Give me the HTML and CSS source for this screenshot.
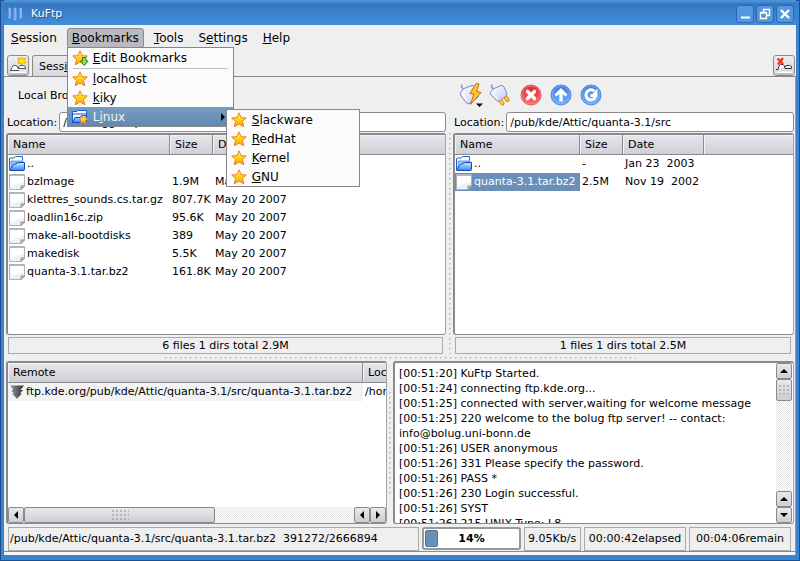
FILE: index.html
```html
<!DOCTYPE html>
<html lang="en">
<head>
    <meta charset="UTF-8">
    <meta name="viewport" content="width=device-width, initial-scale=1.0">
    <title>KuFtp</title>
    <link rel="stylesheet" href="styles.css">
</head>
<body>
    <!-- Shared icons -->
    <svg class="icon-defs" aria-hidden="true">
        <defs>
            <linearGradient id="gold" x1="0" y1="0" x2="0" y2="1">
                <stop offset="0" stop-color="#fff27a"/>
                <stop offset="0.5" stop-color="#ffd21c"/>
                <stop offset="1" stop-color="#ff9a10"/>
            </linearGradient>
            <linearGradient id="folderFill" x1="0" y1="0" x2="0" y2="1">
                <stop offset="0" stop-color="#d5ecff"/>
                <stop offset="1" stop-color="#2f86ee"/>
            </linearGradient>
            <linearGradient id="blueFill" x1="0" y1="0" x2="0" y2="1">
                <stop offset="0" stop-color="#3b76e0"/>
                <stop offset="1" stop-color="#6fb8ff"/>
            </linearGradient>
            <linearGradient id="redFill" x1="0" y1="0" x2="0" y2="1">
                <stop offset="0" stop-color="#e01c2c"/>
                <stop offset="1" stop-color="#ff7468"/>
            </linearGradient>
            <linearGradient id="plugFill" x1="0" y1="0" x2="1" y2="1">
                <stop offset="0" stop-color="#ffffff"/>
                <stop offset="1" stop-color="#c3cbee"/>
            </linearGradient>
            <linearGradient id="greyFill" x1="0" y1="0" x2="1" y2="0">
                <stop offset="0" stop-color="#999"/>
                <stop offset="1" stop-color="#2e2e2e"/>
            </linearGradient>
        </defs>
        <symbol id="star" viewBox="0 0 16 16">
            <path d="M8 0.8 L10.1 5.6 L15.3 6 L11.4 9.4 L12.8 14.8 L8 12 L3.2 14.8 L4.6 9.4 L0.7 6 L5.9 5.6 Z" fill="url(#gold)" stroke="#ee7f1a" stroke-linejoin="round"/>
        </symbol>
        <symbol id="star-edit" viewBox="0 0 16 16">
            <path d="M8 0.8 L10.1 5.6 L15.3 6 L11.4 9.4 L12.8 14.8 L8 12 L3.2 14.8 L4.6 9.4 L0.7 6 L5.9 5.6 Z" fill="url(#gold)" stroke="#ee7f1a" stroke-linejoin="round"/>
            <path d="M10.5 7.5 H14 V11 H16 L12.2 15.4 L8.4 11 H10.5 Z" fill="#9be04a" stroke="#2c7d1c"/>
        </symbol>
        <symbol id="folder" viewBox="0 0 16 16">
            <path d="M0.5 14 V3 Q0.5 2 1.5 2 H5 L6.5 0.5 H13.5 V4.5" fill="#fff" stroke="#1b5fd0"/>
            <path d="M2 5 H14 V7 H5 L2 12 Z" fill="#9fd0ff" stroke="#1b5fd0" stroke-width="0.6"/>
            <path d="M0.8 14.5 L3.5 9.5 Q4 8.5 5.5 8.5 L8.5 6.8 Q9.2 6.5 10 6.5 H15.5 V13.5 Q15.5 14.5 14.5 14.5 Z" fill="url(#folderFill)" stroke="#0c49c0"/>
        </symbol>
        <symbol id="folder-star" viewBox="0 0 16 16">
            <path d="M0.5 12.5 V2.5 H5 L6 1.5 H14.5 V12 Z" fill="#f4faff" stroke="#1b5fd0"/>
            <path d="M1 5 H14" stroke="#1b5fd0"/>
            <path d="M0.5 13.5 L3 8.5 H8 L9.5 6.5 H14.5 V13.5 Z" fill="url(#folderFill)" stroke="#0c49c0"/>
            <path d="M11.5 6 L12.9 9 L16 9.4 L13.7 11.5 L14.4 15 L11.5 13.3 L8.6 15 L9.3 11.5 L7 9.4 L10.1 9 Z" fill="url(#gold)" stroke="#ee7f1a" stroke-width="0.7"/>
        </symbol>
        <symbol id="file" viewBox="0 0 16 16">
            <path d="M0.5 0.5 H15.5 V12 L12 15.5 H0.5 Z" fill="#f1f1f4" stroke="#b0b0b0"/>
            <path d="M1 1.5 H15" stroke="#a5b8f8"/>
            <path d="M1.5 2 H14.500 V8 Q8 9 1.500 13 Z" fill="#fff"/>
            <path d="M15.500 12 H12 V15.500 Z" fill="#d4d4d4" stroke="#8c8c8c"/>
        </symbol>
        <symbol id="plug-on" viewBox="0 0 24 24">
            <path d="M5 6 Q1.500 5 3 1.500" fill="none" stroke="#8b93cc" stroke-width="1.500"/>
            <path d="M5 5.500 L13 2.500 Q15 2 16 4 L19.500 12 Q19.500 14 18 15 L10 20.500 Q8 21 7 19.500 L1.500 12 Q1 10.500 2 9 Z" fill="url(#plugFill)" stroke="#7b86cc"/>
            <path d="M5.500 8 L3.500 11.500 L8 17.500" fill="none" stroke="#fff" stroke-width="1.500"/>
            <path d="M17 0.500 L11 10.500 L15 11 L11.500 21.500 L22 9.500 L17.500 8.500 L20 1 Z" fill="#ffc928" stroke="#d06a00" stroke-linejoin="round"/>
            <path d="M17 20.500 H24 L20.500 24 Z" fill="#000"/>
        </symbol>
        <symbol id="plug-off" viewBox="0 0 24 24">
            <path d="M5 6 Q1.500 5 3 1.500" fill="none" stroke="#8b93cc" stroke-width="1.500"/>
            <path d="M11.500 17.500 L13.500 20.500 M16 13.500 L18.500 17" stroke="#dc8600" stroke-width="4" stroke-linecap="round"/>
            <path d="M11.500 17.500 L13.500 20.500 M16 13.500 L18.500 17" stroke="#ffd94a" stroke-width="2" stroke-linecap="round"/>
            <path d="M5 5.500 L12 2.500 Q14 2 15 4 L18 10.500 Q18 12 17 13 L10.500 18 Q8.500 19 7.500 17.500 L1.500 11 Q1 10 2 8.500 Z" fill="url(#plugFill)" stroke="#7b86cc"/>
            <path d="M5.500 8 L3.500 10.500 L8 15.500" fill="none" stroke="#fff" stroke-width="1.500"/>
        </symbol>
        <symbol id="stop" viewBox="0 0 24 24">
            <circle cx="12" cy="12" r="10" fill="url(#redFill)" stroke="#e0606a"/>
            <circle cx="12" cy="12" r="8.800" fill="none" stroke="#f58a8a" stroke-width="0.700"/>
            <path d="M8.500 8.500 L15.500 15.500 M15.500 8.500 L8.500 15.500" stroke="#fff" stroke-width="3.600" stroke-linecap="round"/>
        </symbol>
        <symbol id="up" viewBox="0 0 24 24">
            <circle cx="12" cy="12" r="10" fill="url(#blueFill)" stroke="#5584dc"/>
            <circle cx="12" cy="12" r="8.800" fill="none" stroke="#86b6fa" stroke-width="0.700"/>
            <path d="M12 5 L18.500 11.500 L16.500 13.500 L13.700 11 V18.500 H10.300 V11 L7.500 13.500 L5.500 11.500 Z" fill="#fff"/>
        </symbol>
        <symbol id="reload" viewBox="0 0 24 24">
            <circle cx="12" cy="12" r="10" fill="url(#blueFill)" stroke="#5584dc"/>
            <circle cx="12" cy="12" r="8.800" fill="none" stroke="#86b6fa" stroke-width="0.700"/>
            <path d="M15.500 8.300 A5 5 0 1 0 16.500 14" fill="none" stroke="#fff" stroke-width="3"/>
            <path d="M11.500 11 H18.500 V14 H11.500 Z M18.500 5.500 V12 H12.500 Z" fill="#fff"/>
        </symbol>
        <symbol id="tab-new" viewBox="0 0 18 18">
            <path d="M1.500 13 Q2 12.500 3 10.500 Q3.500 8.500 5 8.500 H7 Q8 8.500 8.500 10.500 L9 11.500 Q10 8.500 11.500 8.500 H15 Q16.500 8.500 16.500 12 M1 13.500 H10 M9 11.500 H16.500" fill="#fff" stroke="#555"/>
            <path d="M2 15.500 H17" stroke="#fff" stroke-width="2"/>
            <path d="M2 17 H17" stroke="#999"/>
            <path d="M9 1 L11 2 L12.500 0 L14 2 L17 1 L15.500 3.500 L17 6 L14.500 6 L12.500 8 L11.500 6 L9 7 L10 4 Z" fill="#ffe800" stroke="#f0a800"/>
        </symbol>
        <symbol id="tab-close" viewBox="0 0 18 18">
            <path d="M1 12.500 H3 Q4 7.500 5.500 7.500 H8 Q9.500 7.500 10 11.500 H16.500 V10 Q16 8.500 14.500 8.500 H12 Q10.500 8.500 10.500 10" fill="#fff" stroke="#333"/>
            <path d="M2 15.500 H17" stroke="#fff" stroke-width="2"/>
            <path d="M2 17 H17" stroke="#999"/>
            <path d="M2.500 1.500 L8 7 M8 1 L3 7.500" stroke="#f03020" stroke-width="2.200"/>
        </symbol>
        <symbol id="queue" viewBox="0 0 14 14">
            <path d="M0 0.500 H14 L10.500 5 H13 L10 8.500 H12 L7 13.800 L2 8.500 H4 L1 5 H3.500 Z" fill="url(#greyFill)"/>
        </symbol>
    </svg>

    <div class="window">
        <header class="titlebar">
            <svg class="app-logo" viewBox="0 0 16 14" aria-hidden="true">
                <path d="M2.500 2 V10 M8 2 V12 M13.500 2 V10" stroke="#86b5f2" stroke-width="3" stroke-linecap="round"/>
                <path d="M1.500 2 V10 M7 2 V12 M12.500 2 V10" stroke="#5c94dc" stroke-width="1"/>
            </svg>
            <h1>KuFtp</h1>
            <div class="window-buttons">
                <button type="button" aria-label="Minimize"><svg viewBox="0 0 12 12"><path d="M2 9.500 H11" stroke="#fff" stroke-width="2"/></svg></button>
                <button type="button" aria-label="Restore"><svg viewBox="0 0 12 12"><path d="M4.500 4 V1.500 H10.500 V7.500 H8 M1.500 4.500 H7.500 V10.500 H1.500 Z M1 5 H8" fill="none" stroke="#fff" stroke-width="1.400"/></svg></button>
                <button type="button" aria-label="Close"><svg viewBox="0 0 12 12"><path d="M2 2 L10 10 M10 2 L2 10" stroke="#fff" stroke-width="2.400"/></svg></button>
            </div>
        </header>

        <nav class="menubar">
            <button type="button"><u>S</u>ession</button>
            <div class="menu-holder">
                <button type="button" class="open"><u>B</u>ookmarks</button>
                <div class="menu">
                    <button type="button"><svg><use href="#star-edit"/></svg><span><u>E</u>dit Bookmarks</span></button>
                    <hr>
                    <button type="button"><svg><use href="#star"/></svg><span><u>l</u>ocalhost</span></button>
                    <button type="button"><svg><use href="#star"/></svg><span><u>k</u>iky</span></button>
                    <div class="menu-holder">
                        <button type="button" class="selected"><svg><use href="#folder-star"/></svg><span>L<u>i</u>nux</span><i class="arrow right"></i></button>
                        <div class="menu submenu">
                            <button type="button"><svg><use href="#star"/></svg><span><u>S</u>lackware</span></button>
                            <button type="button"><svg><use href="#star"/></svg><span><u>R</u>edHat</span></button>
                            <button type="button"><svg><use href="#star"/></svg><span><u>K</u>ernel</span></button>
                            <button type="button"><svg><use href="#star"/></svg><span><u>G</u>NU</span></button>
                        </div>
                    </div>
                </div>
            </div>
            <button type="button"><u>T</u>ools</button>
            <button type="button">S<u>e</u>ttings</button>
            <button type="button"><u>H</u>elp</button>
        </nav>

        <div class="tabs">
            <button type="button" class="tab-button" aria-label="New session"><svg><use href="#tab-new"/></svg></button>
            <button type="button" class="tab">Sess<u>i</u>on</button>
            <button type="button" class="tab-button last" aria-label="Close session"><svg><use href="#tab-close"/></svg></button>
        </div>

        <main class="session">
            <div class="browsers">
                <section class="browser">
                    <div class="toolbar"><span class="toolbar-label">Local Browser</span></div>
                    <div class="location">
                        <label for="localPath">Location:</label>
                        <input type="text" id="localPath" value="/home/gg/tmp">
                    </div>
                    <div class="list">
                        <table class="local-files">
                            <thead>
                                <tr><th class="name">Name</th><th class="size">Size</th><th>Date</th></tr>
                            </thead>
                            <tbody>
                                <tr><td><svg><use href="#folder"/></svg>..</td><td></td><td></td></tr>
                                <tr><td><svg><use href="#file"/></svg>bzImage</td><td>1.9M</td><td>May 20 2007</td></tr>
                                <tr><td><svg><use href="#file"/></svg>klettres_sounds.cs.tar.gz</td><td>807.7K</td><td>May 20 2007</td></tr>
                                <tr><td><svg><use href="#file"/></svg>loadlin16c.zip</td><td>95.6K</td><td>May 20 2007</td></tr>
                                <tr><td><svg><use href="#file"/></svg>make-all-bootdisks</td><td>389</td><td>May 20 2007</td></tr>
                                <tr><td><svg><use href="#file"/></svg>makedisk</td><td>5.5K</td><td>May 20 2007</td></tr>
                                <tr><td><svg><use href="#file"/></svg>quanta-3.1.tar.bz2</td><td>161.8K</td><td>May 20 2007</td></tr>
                            </tbody>
                        </table>
                    </div>
                    <div class="summary">6 files 1 dirs total 2.9M</div>
                </section>
                <div class="splitter vertical"></div>
                <section class="browser">
                    <div class="toolbar">
                        <button type="button" aria-label="Connect"><svg><use href="#plug-on"/></svg></button>
                        <button type="button" aria-label="Disconnect"><svg><use href="#plug-off"/></svg></button>
                        <button type="button" aria-label="Stop"><svg><use href="#stop"/></svg></button>
                        <button type="button" aria-label="Up"><svg><use href="#up"/></svg></button>
                        <button type="button" aria-label="Reload"><svg><use href="#reload"/></svg></button>
                    </div>
                    <div class="location">
                        <label for="remotePath">Location:</label>
                        <input type="text" id="remotePath" value="/pub/kde/Attic/quanta-3.1/src">
                    </div>
                    <div class="list">
                        <table class="remote-files">
                            <thead>
                                <tr><th class="name">Name</th><th class="size">Size</th><th class="date">Date</th><th></th></tr>
                            </thead>
                            <tbody>
                                <tr><td><svg><use href="#folder"/></svg>..</td><td>-</td><td>Jan 23  2003</td><td></td></tr>
                                <tr><td class="selected"><svg><use href="#file"/></svg>quanta-3.1.tar.bz2</td><td>2.5M</td><td>Nov 19  2002</td><td></td></tr>
                            </tbody>
                        </table>
                    </div>
                    <div class="summary">1 files 1 dirs total 2.5M</div>
                </section>
            </div>

            <div class="splitter horizontal"></div>

            <div class="transfers">
                <section class="list queue">
                    <table>
                        <thead>
                            <tr><th class="remote">Remote</th><th>Local</th></tr>
                        </thead>
                        <tbody>
                            <tr><td class="current"><svg><use href="#queue"/></svg>ftp.kde.org/pub/kde/Attic/quanta-3.1/src/quanta-3.1.tar.bz2</td><td>/home</td></tr>
                        </tbody>
                    </table>
                    <div class="scrollbar across">
                        <button type="button" aria-label="Scroll left"><i class="arrow left"></i></button>
                        <div class="track"><div class="thumb"></div></div>
                        <button type="button" aria-label="Scroll left"><i class="arrow left"></i></button>
                        <button type="button" aria-label="Scroll right"><i class="arrow right"></i></button>
                    </div>
                </section>
                <div class="splitter vertical"></div>
                <section class="list log">
                    <div class="log-text">
                        <p>[00:51:20] KuFtp Started.</p>
                        <p>[00:51:24] connecting ftp.kde.org...</p>
                        <p>[00:51:25] connected with server,waiting for welcome message</p>
                        <p>[00:51:25] 220 welcome to the bolug ftp server! -- contact: info@bolug.uni-bonn.de</p>
                        <p>[00:51:26] USER anonymous</p>
                        <p>[00:51:26] 331 Please specify the password.</p>
                        <p>[00:51:26] PASS *</p>
                        <p>[00:51:26] 230 Login successful.</p>
                        <p>[00:51:26] SYST</p>
                        <p>[00:51:26] 215 UNIX Type: L8</p>
                    </div>
                    <div class="scrollbar down">
                        <button type="button" aria-label="Scroll up"><i class="arrow up"></i></button>
                        <div class="track"><div class="thumb"></div></div>
                        <button type="button" aria-label="Scroll up"><i class="arrow up"></i></button>
                        <button type="button" aria-label="Scroll down"><i class="arrow down"></i></button>
                    </div>
                </section>
            </div>

            <footer class="statusbar">
                <div class="cell path">/pub/kde/Attic/quanta-3.1/src/quanta-3.1.tar.bz2  391272/2666894</div>
                <div class="progress">
                    <progress id="transfer" value="14" max="100"></progress>
                    <label for="transfer">14%</label>
                </div>
                <div class="cell">9.05Kb/s</div>
                <div class="cell time">00:00:42elapsed</div>
                <div class="cell time">00:04:06remain</div>
            </footer>
        </main>
    </div>
</body>
</html>
```

FILE: styles.css
```css
* {
    box-sizing: border-box;
}
body {
    margin: 0;
    font-family: "DejaVu Sans", sans-serif;
    font-size: 11px;
    color: #000;
}
button, input {
    font: inherit;
    color: inherit;
    margin: 0;
    padding: 0;
}
button {
    border: none;
    background: none;
}
svg {
    display: block;
    flex: none;
}
.icon-defs {
    position: absolute;
    width: 0;
    height: 0;
}
.window {
    height: 100vh;
    display: flex;
    flex-direction: column;
    padding: 0 4px 5px;
    background: #3a83d2;
    border-bottom: 1px solid #1d4f8c;
    box-shadow: inset 1px 0 #1d4f8c, inset -1px 0 #1d4f8c, inset 0 1px #1d4f8c;
}

/* Title bar */
.titlebar {
    height: 25px;
    flex: none;
    display: flex;
    align-items: center;
    gap: 8px;
    padding: 2px 2px 0 3px;
    background: linear-gradient(#4b92dd 1px, #3677bd 4px, #438ddb);
}
.titlebar h1 {
    margin: 0;
    flex: 1;
    font-size: 11px;
    font-weight: normal;
    color: #fff;
    text-shadow: 1px 1px 1px #1d4f8c;
}
.app-logo {
    width: 16px;
    height: 14px;
}
.window-buttons {
    display: flex;
    gap: 2px;
}
.window-buttons button {
    width: 18px;
    height: 18px;
    padding: 2px;
    border: 1px solid #2c68ac;
    border-radius: 3px;
    background: #5597dc;
}
.window-buttons svg {
    width: 12px;
    height: 12px;
}

/* Menus */
.menubar {
    display: flex;
    gap: 5px;
    flex: none;
    height: 30px;
    padding: 3px 2px;
    background: #efefef;
    font-size: 12px;
}
.menubar > button, .menu-holder > .open {
    height: 20px;
    padding: 0 4px;
    border: 1px solid transparent;
}
.menu-holder {
    position: relative;
}
.menubar .open {
    border-color: #8a8a90;
    border-radius: 3px;
    background: #b9b9bf;
}
.menu {
    position: absolute;
    z-index: 2;
    top: 19px;
    left: 0;
    width: 167px;
    border: 1px solid #888;
    background: #fbfbfb;
}
.menu button {
    display: flex;
    align-items: center;
    gap: 5px;
    width: 100%;
    height: 19px;
    padding: 0 8px 0 4px;
    text-align: left;
}
.menu button span {
    flex: 1;
}
.menu svg {
    width: 16px;
    height: 16px;
}
.menu hr {
    height: 1px;
    margin: 1px 5px 0;
    border: none;
    background: #c0c0c0;
}
.menu .selected {
    background: linear-gradient(#789dc1, #6089b2);
    color: #f4f4f4;
}
.submenu {
    top: 2px;
    left: 158px;
    width: 134px;
}
.arrow {
    display: block;
    width: 0;
    height: 0;
    border: 4px solid transparent;
}
.arrow.right {
    border-left-color: #000;
    border-right: none;
}
.arrow.left {
    border-right-color: #000;
    border-left: none;
}
.arrow.up {
    border-bottom-color: #000;
    border-top: none;
}
.arrow.down {
    border-top-color: #000;
    border-bottom: none;
}

/* Tabs */
.tabs {
    display: flex;
    gap: 3px;
    flex: none;
    height: 21px;
    padding: 0 1px 0 3px;
    background: #efefef;
}
.tab-button {
    width: 22px;
    height: 21px;
    padding: 1px;
    border: 1px solid #8a8a8a;
    border-radius: 3px;
    background: linear-gradient(#efeff2, #d3d3d9);
}
.tab-button svg {
    width: 18px;
    height: 18px;
}
.tab-button.last {
    margin-left: auto;
}
.tab {
    padding: 0 6px;
    border: 1px solid #8a8a8a;
    border-bottom: none;
    border-radius: 3px 3px 0 0;
    background: linear-gradient(#e9e9ec, #dadade);
}

/* Session page */
.session {
    flex: 1;
    min-height: 0;
    display: flex;
    flex-direction: column;
    padding: 0 2px 3px;
    border-top: 1px solid #8a8a8a;
    background: #efefef;
    box-shadow: inset -1px 0 #999, inset 0 -3px #f6f6f6, inset 0 -4px #8a8a8a;
}
.browsers {
    flex: 1;
    min-height: 0;
    display: grid;
    grid-template-columns: 440fr 7px 341fr;
}
.browser {
    display: flex;
    flex-direction: column;
    min-width: 0;
    min-height: 0;
}
.toolbar {
    display: flex;
    align-items: center;
    gap: 6px;
    height: 34px;
    padding: 2px 6px 0;
}
.toolbar-label {
    padding-left: 6px;
}
.toolbar svg {
    width: 24px;
    height: 24px;
}
.location {
    display: flex;
    align-items: center;
    gap: 2px;
    height: 22px;
    padding-left: 1px;
}
.location input {
    flex: 1;
    min-width: 0;
    height: 20px;
    padding: 0 3px;
    border: 1px solid #8a8a8a;
    border-radius: 3px;
    background: #fff;
}
.list {
    flex: 1;
    min-width: 0;
    min-height: 0;
    overflow: hidden;
    border: 2px solid #999;
    border-color: #8a8a8a #a4a4a4 #8a8a8a #8a8a8a;
    border-width: 2px 1px 1px 2px;
    border-radius: 3px;
    background: #fff;
}
table {
    width: 100%;
    table-layout: fixed;
    border-collapse: separate;
    border-spacing: 0;
}
th {
    height: 20px;
    padding: 0 5px;
    overflow: hidden;
    border-right: 1px solid #8a8a8a;
    border-bottom: 1px solid #8a8a8a;
    background: linear-gradient(#e6e6ec, #cfcfd6);
    box-shadow: inset 1px 1px #f4f4f6;
    font-weight: normal;
    text-align: left;
    white-space: nowrap;
}
th:last-child {
    border-right: none;
}
td {
    height: 18px;
    padding: 0 0 0 2px;
    line-height: 18px;
    white-space: pre;
}
td:first-child {
    padding-left: 1px;
    overflow: hidden;
}
td svg {
    float: left;
    width: 16px;
    height: 16px;
    margin: 1px 2px 0 0;
}
.local-files .name {
    width: 162px;
}
.remote-files .name {
    width: 125px;
}
.size {
    width: 43px;
}
.date {
    width: 81px;
}
td.selected {
    background: #6a90b8;
    color: #fff;
}
.summary {
    height: 17px;
    margin: 2px 3px 0 2px;
    border: 1px solid #aaa;
    line-height: 15px;
    text-align: center;
}

/* Dotted handles between the panes */
.splitter {
    background: radial-gradient(circle, #c4c4c4 1px, transparent 1px) center / 5px 5px;
}
.splitter.vertical {
    width: 3px;
    margin: 56px 2px 0;
}
.transfers .splitter.vertical {
    margin: 30px 1px;
}
.splitter.horizontal {
    flex: none;
    width: 60%;
    height: 3px;
    margin: 2px auto;
}

/* Transfer queue and log */
.transfers {
    flex: none;
    height: 163px;
    display: grid;
    grid-template-columns: 381fr 6px 401fr;
}
.queue {
    display: flex;
    flex-direction: column;
    justify-content: space-between;
}
.queue .remote {
    width: 355px;
}
.queue th:last-child {
    padding-right: 0;
}
.queue td svg {
    width: 14px;
    height: 14px;
    margin: 2px 2px 0 1px;
}
.current {
    background: #f3f3f3;
}
.log {
    display: flex;
}
.log-text {
    flex: 1;
    min-width: 0;
    padding: 3px 0 0 4px;
}
.log-text p {
    margin: 0;
    line-height: 15px;
}
.scrollbar {
    display: flex;
    flex: none;
}
.scrollbar.down {
    flex-direction: column;
    width: 16px;
    margin-right: 1px;
}
.scrollbar.across {
    height: 16px;
}
.scrollbar button, .thumb {
    border: 1px solid #8a8a8a;
    border-radius: 2px;
    background: linear-gradient(#e9e9ed, #cdcdd4);
}
.scrollbar button {
    display: flex;
    align-items: center;
    justify-content: center;
    width: 16px;
    height: 16px;
    flex: none;
}
.track {
    flex: 1;
    background: repeating-conic-gradient(#e6e6e6 0 25%, #fff 0 50%) 0 0 / 2px 2px;
}
.thumb::after {
    content: "";
    display: block;
    width: 18px;
    height: 12px;
    background: radial-gradient(circle, #b4b4b9 1px, transparent 1px) 0 0 / 4px 4px;
}
.thumb {
    display: flex;
    align-items: center;
    justify-content: center;
}
.across .thumb {
    width: 58%;
    height: 16px;
}
.down .thumb {
    height: 22px;
}
.down .thumb::after {
    width: 12px;
}

/* Status bar */
.statusbar {
    display: flex;
    gap: 3px;
    flex: none;
    height: 28px;
    padding: 3px 3px 1px 2px;
}
.cell {
    min-width: 57px;
    padding: 0 3px;
    border: 1px solid #aaa;
    line-height: 22px;
    white-space: pre;
}
.cell.time {
    width: 102px;
    padding: 0;
    text-align: center;
}
.cell.path {
    flex: 1;
    min-width: 0;
    padding: 0 1px;
    overflow: hidden;
}
.progress {
    position: relative;
    width: 99px;
}
.progress progress {
    display: block;
    width: 100%;
    height: 23px;
    padding: 1px;
    appearance: none;
    border: 2px solid #999;
    border-radius: 3px;
    background: #fff;
}
progress::-webkit-progress-bar {
    background: #fff;
}
progress::-webkit-progress-value {
    border: 1px solid #4f7398;
    border-radius: 2px;
    background: #6a90b8;
}
.progress label {
    position: absolute;
    inset: 0;
    line-height: 23px;
    text-align: center;
    font-weight: bold;
}
```
